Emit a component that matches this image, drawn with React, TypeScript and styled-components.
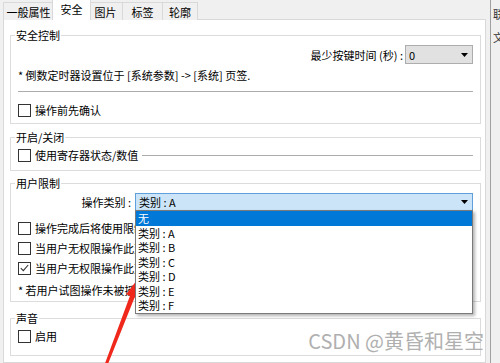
import styled, { createGlobalStyle } from 'styled-components';

const GlobalStyle = createGlobalStyle`
  html, body {
    margin: 0;
    padding: 0;
    background: #f0f0f0;
  }
  body {
    font-family: "Noto Sans CJK SC", "Noto Sans", sans-serif;
    font-size: 11px;
    color: #000;
  }
`;

const Screen = styled.div`
  position: relative;
  display: flex;
  width: 500px;
  height: 363px;
  overflow: hidden;
`;

const Main = styled.div`
  display: flex;
  flex-direction: column;
  width: 486px;
  padding-left: 3px;
  box-sizing: border-box;
`;

const TabBar = styled.div`
  display: flex;
  align-items: flex-end;
  height: 20px;
  margin-bottom: -1px;
`;

const Tab = styled.div<{ $w: number; $active?: boolean; $first?: boolean }>`
  position: relative;
  z-index: ${(p) => (p.$active ? 2 : 1)};
  box-sizing: border-box;
  display: flex;
  align-items: center;
  justify-content: center;
  width: ${(p) => (p.$active ? p.$w + 4 : p.$w)}px;
  height: ${(p) => (p.$active ? 21 : 18)}px;
  margin: 0 ${(p) => (p.$active ? -2 : 0)}px;
  padding-bottom: ${(p) => (p.$active ? 2 : 0)}px;
  background: ${(p) => (p.$active ? '#fff' : '#f0f0f0')};
  border-top: 1px solid #d9d9d9;
  border-right: 1px solid #d9d9d9;
  border-left: ${(p) => (p.$active || p.$first ? '1px solid #d9d9d9' : 'none')};
  white-space: nowrap;
`;

const Panel = styled.div`
  flex: 1;
  display: flex;
  flex-direction: column;
  padding: 8px 4px 0 6px;
  background: #fff;
  border: 1px solid #d9d9d9;
`;

const Group = styled.fieldset<{ $mt: number; $pb: number }>`
  margin: ${(p) => p.$mt}px 0 0 0;
  padding: 0 7px ${(p) => p.$pb}px 7px;
  border: 1px solid #dcdcdc;
  min-width: 0;
`;

const Legend = styled.legend`
  margin-left: -3px;
  padding: 0 1px;
  font-size: 11px;
  line-height: 14px;
`;

const SettingRow = styled.div`
  display: flex;
  justify-content: flex-end;
  align-items: center;
  height: 19px;
  margin-top: 3px;
  gap: 2px;
`;

const Select = styled.div<{ $w?: number; $focus?: boolean }>`
  position: relative;
  box-sizing: border-box;
  display: flex;
  align-items: center;
  justify-content: space-between;
  width: ${(p) => (p.$w ? `${p.$w}px` : 'auto')};
  flex: ${(p) => (p.$w ? 'none' : 1)};
  height: 100%;
  padding: 0 4px 0 3px;
  background: ${(p) => (p.$focus ? '#cce4f7' : '#e1e1e1')};
  border: 1px solid ${(p) => (p.$focus ? '#5f9fdc' : '#adadad')};
`;

const Arrow = styled.svg`
  width: 7px;
  height: 4px;
  flex-shrink: 0;
`;

const Note = styled.div<{ $mt: number }>`
  margin-top: ${(p) => p.$mt}px;
  line-height: 16px;
  white-space: nowrap;
`;

const Separator = styled.div`
  height: 1px;
  margin-top: 8px;
  background: #acacac;
`;

const CheckRow = styled.div<{ $mt: number }>`
  display: flex;
  align-items: center;
  gap: 4px;
  height: 16px;
  margin-top: ${(p) => p.$mt}px;
  white-space: nowrap;
`;

const Box = styled.span`
  box-sizing: border-box;
  display: flex;
  align-items: center;
  justify-content: center;
  width: 13px;
  height: 13px;
  flex-shrink: 0;
  background: #fff;
  border: 1px solid #333;
`;

const LineFill = styled.div`
  flex: 1;
  height: 1px;
  margin-left: 0;
  background: #acacac;
`;

const CategoryRow = styled.div`
  display: flex;
  align-items: center;
  height: 18px;
  margin-top: 3px;
`;

const CategoryLabel = styled.span`
  width: 117px;
  padding-right: 4px;
  box-sizing: border-box;
  text-align: right;
  white-space: nowrap;
`;

const DropList = styled.div`
  position: absolute;
  z-index: 5;
  top: 100%;
  left: -1px;
  right: -1px;
  background: #fff;
  border: 1px solid #7a7a7a;
  box-shadow: 2px 2px 3px rgba(0, 0, 0, 0.3);
`;

const DropItem = styled.div<{ $sel?: boolean }>`
  height: 14.5px;
  line-height: 14.5px;
  padding-left: 2px;
  background: ${(p) => (p.$sel ? '#0078d7' : 'transparent')};
  color: ${(p) => (p.$sel ? '#fff' : '#000')};
`;

const SideStrip = styled.div`
  flex: 1;
  margin-left: 4px;
  padding: 3px 0 0 2px;
  border-left: 1px solid #a0a0a0;
  overflow: hidden;
  line-height: 23px;
  white-space: nowrap;
  color: #333;
`;

const Watermark = styled.div`
  position: absolute;
  right: 16px;
  top: 328px;
  font-size: 20px;
  line-height: 26px;
  color: #b0b0b0;
  white-space: nowrap;
  pointer-events: none;
`;

const Overlay = styled.svg`
  position: absolute;
  left: 0;
  top: 0;
  pointer-events: none;
`;

function Check({ checked }: { checked?: boolean }) {
  return (
    <Box>
      {checked && (
        <svg width="9" height="8" viewBox="0 0 9 8">
          <path d="M0.8 4.2 L3.3 6.6 L8.2 1" fill="none" stroke="#333" strokeWidth="1.1" />
        </svg>
      )}
    </Box>
  );
}

function DownArrow() {
  return (
    <Arrow viewBox="0 0 7 4">
      <path d="M0 0 H7 L3.5 4 Z" fill="#000" />
    </Arrow>
  );
}

const tabs = [
  { label: '一般属性', w: 51 },
  { label: '安全', w: 35, active: true },
  { label: '图片', w: 34 },
  { label: '标签', w: 40 },
  { label: '轮廓', w: 35 },
];

const categories = ['无', '类别 : A', '类别 : B', '类别 : C', '类别 : D', '类别 : E', '类别 : F'];

export default function App() {
  return (
    <>
      <GlobalStyle />
      <Screen>
        <Main>
          <TabBar>
            {tabs.map((t, i) => (
              <Tab key={t.label} $w={t.w} $active={t.active} $first={i === 0}>
                {t.label}
              </Tab>
            ))}
          </TabBar>
          <Panel>
            <Group $mt={0} $pb={5}>
              <Legend>安全控制</Legend>
              <SettingRow>
                <span>最少按键时间 (秒) :</span>
                <Select $w={68}>
                  <span>0</span>
                  <DownArrow />
                </Select>
              </SettingRow>
              <Note $mt={3}>* 倒数定时器设置位于 [系统参数] -&gt; [系统] 页签.</Note>
              <Separator />
              <CheckRow $mt={10}>
                <Check />
                <span>操作前先确认</span>
              </CheckRow>
            </Group>

            <Group $mt={6} $pb={7}>
              <Legend>开启/关闭</Legend>
              <CheckRow $mt={3}>
                <Check />
                <span>使用寄存器状态/数值</span>
                <LineFill />
              </CheckRow>
            </Group>

            <Group $mt={5} $pb={3}>
              <Legend>用户限制</Legend>
              <CategoryRow>
                <CategoryLabel>操作类别 :</CategoryLabel>
                <Select $focus>
                  <span>类别 : A</span>
                  <DownArrow />
                  <DropList>
                    {categories.map((c, i) => (
                      <DropItem key={c} $sel={i === 0}>
                        {c}
                      </DropItem>
                    ))}
                  </DropList>
                </Select>
              </CategoryRow>
              <CheckRow $mt={9}>
                <Check />
                <span>操作完成后将使用限制恢复原状</span>
              </CheckRow>
              <CheckRow $mt={4}>
                <Check />
                <span>当用户无权限操作此对象时隐藏</span>
              </CheckRow>
              <CheckRow $mt={4}>
                <Check checked />
                <span>当用户无权限操作此对象时显示</span>
              </CheckRow>
              <Note $mt={6}>* 若用户试图操作未被授权对象</Note>
            </Group>

            <Group $mt={9} $pb={11}>
              <Legend>声音</Legend>
              <CheckRow $mt={3}>
                <Check />
                <span>启用</span>
              </CheckRow>
            </Group>
          </Panel>
        </Main>
        <SideStrip>
          <div>联</div>
          <div>文</div>
        </SideStrip>
        <Watermark>CSDN @黄昏和星空</Watermark>
        <Overlay width="500" height="363" viewBox="0 0 500 363">
          <polygon
            points="140,276 138.4,298.9 134.6,297.5 107.4,365.5 104.6,364.5 130,295.7 126.2,294.3"
            fill="#f0271b"
          />
        </Overlay>
      </Screen>
    </>
  );
}
